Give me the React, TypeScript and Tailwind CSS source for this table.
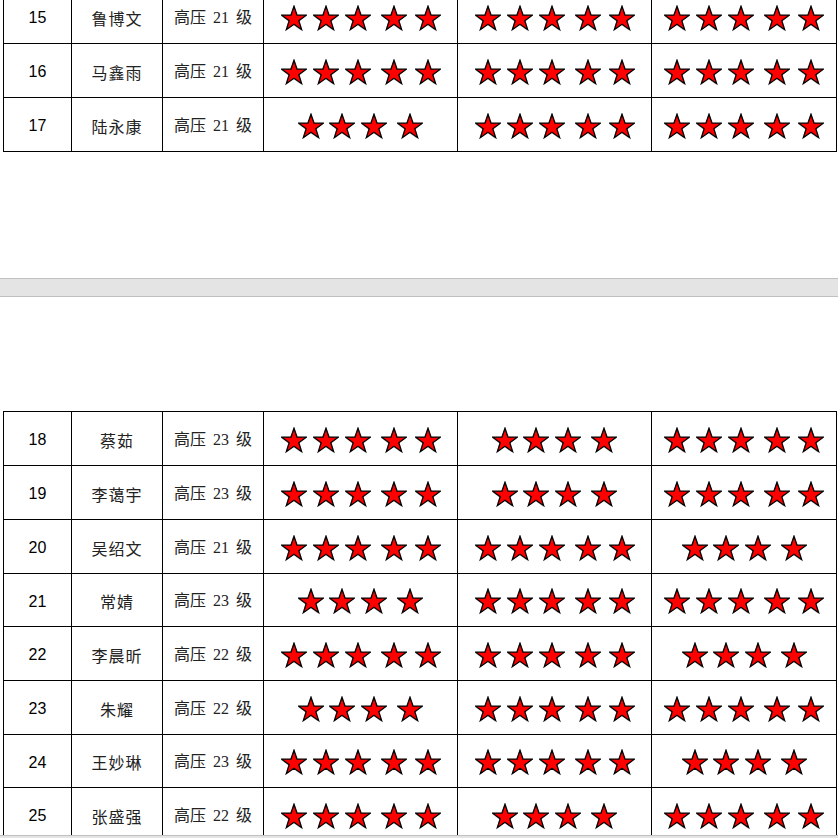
import React from 'react'

type Row = {
  no: number
  name: string
  cls: string
  stars: [number, number, number]
  h: string
}

const TOP_ROWS: Row[] = [
  { no: 15, name: '鲁博文', cls: '21', stars: [5, 5, 5], h: 'h-[54px]' },
  { no: 16, name: '马鑫雨', cls: '21', stars: [5, 5, 5], h: 'h-[54px]' },
  { no: 17, name: '陆永康', cls: '21', stars: [4, 5, 5], h: 'h-[54px]' },
]

const BOTTOM_ROWS: Row[] = [
  { no: 18, name: '蔡茹', cls: '23', stars: [5, 4, 5], h: 'h-[54px]' },
  { no: 19, name: '李蔼宇', cls: '23', stars: [5, 4, 5], h: 'h-[54px]' },
  { no: 20, name: '吴绍文', cls: '21', stars: [5, 5, 4], h: 'h-[54px]' },
  { no: 21, name: '常婧', cls: '23', stars: [4, 5, 5], h: 'h-[53px]' },
  { no: 22, name: '李晨昕', cls: '22', stars: [5, 5, 4], h: 'h-[54px]' },
  { no: 23, name: '朱耀', cls: '22', stars: [4, 5, 5], h: 'h-[54px]' },
  { no: 24, name: '王妙琳', cls: '23', stars: [5, 5, 4], h: 'h-[53px]' },
  { no: 25, name: '张盛强', cls: '22', stars: [5, 4, 5], h: 'h-[54px]' },
]

const GAP5 = ['', 'ml-[6px]', 'ml-[6px]', 'ml-[10px]', 'ml-[8px]']
const GAP4 = ['', 'ml-[5px]', 'ml-[6px]', 'ml-[10px]']

// five point star, centred in a 26x27 box
function starPoints(dx = 0, dy = 0) {
  const pts: string[] = []
  for (let i = 0; i < 10; i++) {
    const r = i % 2 === 0 ? 13 : 5.1
    const a = (-90 + i * 36) * (Math.PI / 180)
    pts.push(`${(13 + dx + r * Math.cos(a)).toFixed(2)},${(14.2 + dy + r * Math.sin(a)).toFixed(2)}`)
  }
  return pts.join(' ')
}

function Star({ className }: { className: string }) {
  return (
    <svg className={className} width="26" height="27" viewBox="0 0 26 27">
      <polygon points={starPoints(-0.8, 0.8)} fill="#9a9a9a" opacity="0.55" />
      <polygon
        points={starPoints()}
        fill="#ff0000"
        stroke="#000"
        strokeWidth={1.3}
        strokeLinejoin="miter"
      />
    </svg>
  )
}

function Stars({ n }: { n: number }) {
  const gaps = n === 5 ? GAP5 : GAP4
  return (
    <div className="flex items-center justify-center pt-[3px]">
      {gaps.map((g, i) => (
        <Star key={i} className={`shrink-0 ${g}`} />
      ))}
    </div>
  )
}

function TableRow({ row }: { row: Row }) {
  return (
    <div className={`flex ${row.h} border-b border-black`}>
      <div className="w-[68px] border-r border-black flex items-center justify-center pt-[3px] font-['Liberation_Sans',sans-serif] text-[16px] text-black">
        {row.no}
      </div>
      <div className="w-[91px] border-r border-black flex items-center justify-center pt-[2px] font-['Noto_Sans_CJK_SC',sans-serif] text-[16px] text-[#222] tracking-[1px]">
        {row.name}
      </div>
      <div className="w-[101px] border-r border-black flex items-center justify-center pt-[2px] font-['Liberation_Serif','Noto_Sans_CJK_SC',serif] text-[16px] text-[#222] [word-spacing:3px]">
        高压 {row.cls} 级
      </div>
      <div className="w-[194px] border-r border-black">
        <div className="h-full flex items-center justify-center">
          <Stars n={row.stars[0]} />
        </div>
      </div>
      <div className="w-[194px] border-r border-black">
        <div className="h-full flex items-center justify-center">
          <Stars n={row.stars[1]} />
        </div>
      </div>
      <div className="w-[184px]">
        <div className="h-full flex items-center justify-center">
          <Stars n={row.stars[2]} />
        </div>
      </div>
    </div>
  )
}

export default function App() {
  return (
    <div className="w-[838px] h-[838px] overflow-hidden bg-white flex flex-col">
      {/* end of previous page */}
      <div className="h-[278px] shrink-0 overflow-hidden">
        <div className="ml-[3px] w-[834px] mt-[-10px] border-l border-r border-black">
          {TOP_ROWS.map((r) => (
            <TableRow key={r.no} row={r} />
          ))}
        </div>
      </div>

      {/* page gap */}
      <div className="h-[19px] shrink-0 border-y border-[#c0c0c0] bg-[#e4e4e4]" />

      {/* next page */}
      <div className="h-[538px] shrink-0 overflow-hidden pt-[114px]">
        <div className="ml-[3px] w-[834px] border-t border-l border-r border-black">
          {BOTTOM_ROWS.map((r) => (
            <TableRow key={r.no} row={r} />
          ))}
        </div>
      </div>
      <div className="flex-1 border-t border-[#c0c0c0] bg-[#e4e4e4]" />
    </div>
  )
}
